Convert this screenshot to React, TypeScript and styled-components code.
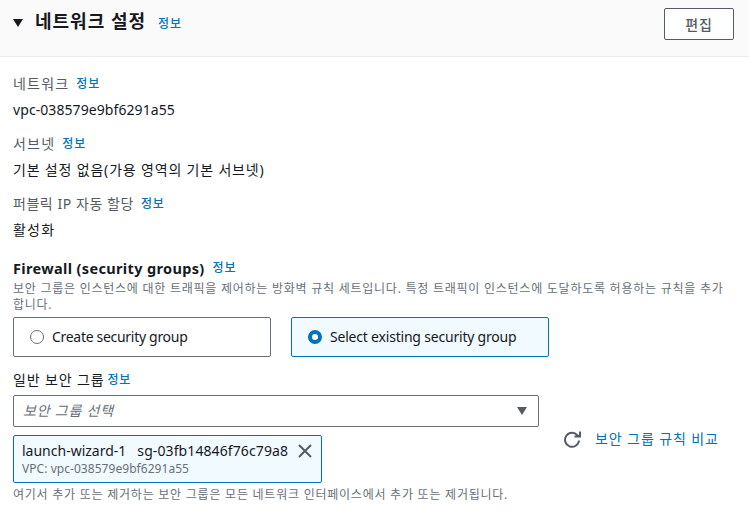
import React from 'react';
import styled, { createGlobalStyle } from 'styled-components';

const GlobalStyle = createGlobalStyle`
  *, *::before, *::after { box-sizing: border-box; }
  body {
    margin: 0;
    background: #fff;
    color: #16191f;
    font-family: "Noto Sans", "Noto Sans CJK KR", sans-serif;
    font-size: 14px;
  }
`;

interface TextProps {
  $size?: number;
  $track?: number;
  $color?: string;
  $weight?: number;
  $line?: number;
}

const Text = styled.span<TextProps>`
  display: block;
  white-space: nowrap;
  font-size: ${(p) => p.$size ?? 14}px;
  letter-spacing: ${(p) => p.$track ?? 0}px;
  color: ${(p) => p.$color ?? '#16191f'};
  font-weight: ${(p) => p.$weight ?? 400};
  line-height: ${(p) => p.$line ?? 22}px;
`;

const InfoLink = styled.a`
  font-size: 12px;
  font-weight: 500;
  letter-spacing: 0.9px;
  line-height: 22px;
  color: #0073bb;
  text-decoration: none;
  white-space: nowrap;
`;

const Panel = styled.main`
  width: 749px;
  height: 519px;
  overflow: hidden;
  background: #fff;
`;

const Header = styled.header`
  display: flex;
  align-items: flex-start;
  height: 57px;
  padding: 8px 15px 0 13px;
  background: #fafafa;
  border-bottom: 1px solid #eaeded;
`;

const Caret = styled.svg`
  display: block;
  width: 10px;
  height: 8px;
  margin: 11px 12px 0 0;
`;

const Title = styled.h2`
  margin: 2px 12px 0 0;
  font-size: 18px;
  font-weight: 700;
  line-height: 22px;
  letter-spacing: 1px;
  white-space: nowrap;
`;

const HeaderInfo = styled.div`
  display: flex;
  flex: 1;
  padding-top: 5px;
`;

const EditButton = styled.button`
  width: 70px;
  height: 32px;
  padding: 0;
  border: 1px solid #545b64;
  border-radius: 2px;
  background: #fff;
  color: #545b64;
  font: 500 14px/28px "Noto Sans CJK KR", sans-serif;
  letter-spacing: 0.8px;
`;

const Content = styled.div`
  padding: 16px 13px 0;
`;

const Field = styled.div`
  height: 60px;
`;

const LabelRow = styled.div<{ $gap?: number }>`
  display: flex;
  align-items: center;
  gap: ${(p) => p.$gap ?? 7}px;
  height: 22px;
`;

const FieldValue = styled.div`
  padding-top: 4px;
`;

const Firewall = styled.section`
  padding-top: 4px;
`;

const Description = styled.div`
  padding-top: 2px;
`;

const Tiles = styled.div`
  display: grid;
  grid-template-columns: 258px 258px;
  gap: 20px;
  margin-top: 4px;
`;

const Tile = styled.label<{ $selected?: boolean }>`
  display: flex;
  align-items: center;
  gap: 8px;
  height: 40px;
  padding-left: 16px;
  border: 1px solid ${(p) => (p.$selected ? '#0073bb' : '#687078')};
  border-radius: 2px;
  background: ${(p) => (p.$selected ? '#f1faff' : '#fff')};
`;

const Radio = styled.span<{ $selected?: boolean }>`
  width: 14px;
  height: 14px;
  border-radius: 50%;
  border: ${(p) => (p.$selected ? '4px solid #0073bb' : '1px solid #687078')};
  background: #fff;
`;

const Groups = styled.section`
  padding-top: 12px;
`;

const GroupRow = styled.div`
  display: flex;
`;

const Picker = styled.div`
  width: 526px;
`;

const Select = styled.div`
  display: flex;
  align-items: center;
  justify-content: space-between;
  height: 32px;
  margin-top: 4px;
  padding: 0 11px 0 9px;
  border: 1px solid #687078;
  border-radius: 2px;
  font-style: italic;
`;

const SelectCaret = styled.svg`
  display: block;
  width: 10px;
  height: 8px;
`;

const Token = styled.div`
  display: flex;
  justify-content: space-between;
  width: 309px;
  height: 48px;
  margin: 8px 0 1px;
  padding: 5px 9px 0 8px;
  border: 1px solid #0073bb;
  border-radius: 2px;
  background: #f1faff;
`;

const TokenLine = styled.div`
  display: flex;
  gap: 11px;
`;

const CloseIcon = styled.svg`
  display: block;
  width: 14px;
  height: 14px;
  margin-top: 3px;
`;

const Compare = styled.div`
  display: flex;
  align-items: flex-start;
  gap: 14px;
  padding: 37px 0 0 25px;
`;

const RefreshIcon = styled.svg`
  display: block;
  width: 17px;
  height: 17px;
  margin-top: 3px;
`;

const fields = [
  { label: '네트워크', track: 1.2, value: 'vpc-038579e9bf6291a55', valueTrack: 0.08 },
  { label: '서브넷', track: 1.2, value: '기본 설정 없음(가용 영역의 기본 서브넷)', valueTrack: 0.82 },
  { label: '퍼블릭 IP 자동 할당', track: 0.55, value: '활성화', valueTrack: 1.2 },
];

export default function App() {
  return (
    <Panel>
      <GlobalStyle />
      <Header>
        <Caret viewBox="0 0 10 8"><path d="M0 0h10L5 8z" fill="#16191f" /></Caret>
        <Title>네트워크 설정</Title>
        <HeaderInfo><InfoLink>정보</InfoLink></HeaderInfo>
        <EditButton>편집</EditButton>
      </Header>
      <Content>
        {fields.map((f) => (
          <Field key={f.label}>
            <LabelRow>
              <Text $color="#545b64" $track={f.track}>{f.label}</Text>
              <InfoLink>정보</InfoLink>
            </LabelRow>
            <FieldValue><Text $track={f.valueTrack}>{f.value}</Text></FieldValue>
          </Field>
        ))}
        <Firewall>
          <LabelRow $gap={8}>
            <Text $weight={700} $size={14.5} $track={0.35}>Firewall (security groups)</Text>
            <InfoLink>정보</InfoLink>
          </LabelRow>
          <Description>
            <Text $size={12} $track={0.75} $color="#687078" $line={16}>
              보안 그룹은 인스턴스에 대한 트래픽을 제어하는 방화벽 규칙 세트입니다. 특정 트래픽이 인스턴스에 도달하도록 허용하는 규칙을 추가
              <br />
              합니다.
            </Text>
          </Description>
          <Tiles>
            <Tile>
              <Radio />
              <Text $track={-0.3}>Create security group</Text>
            </Tile>
            <Tile $selected>
              <Radio $selected />
              <Text $track={-0.2}>Select existing security group</Text>
            </Tile>
          </Tiles>
        </Firewall>
        <Groups>
          <LabelRow $gap={3}>
            <Text $track={0.85}>일반 보안 그룹</Text>
            <InfoLink>정보</InfoLink>
          </LabelRow>
          <GroupRow>
            <Picker>
              <Select>
                <Text $color="#687078" $track={0.8}>보안 그룹 선택</Text>
                <SelectCaret viewBox="0 0 10 8"><path d="M0 0h10L5 8z" fill="#545b64" /></SelectCaret>
              </Select>
              <Token>
                <div>
                  <TokenLine>
                    <Text $line={20}>launch-wizard-1</Text>
                    <Text $line={20} $track={0.1}>sg-03fb14846f76c79a8</Text>
                  </TokenLine>
                  <Text $size={12} $track={0.05} $color="#687078" $line={16}>VPC: vpc-038579e9bf6291a55</Text>
                </div>
                <CloseIcon viewBox="0 0 14 14"><path d="M1 1l12 12M13 1L1 13" stroke="#545b64" strokeWidth="2" /></CloseIcon>
              </Token>
              <Text $size={12} $track={0.76} $color="#687078" $line={22}>
                여기서 추가 또는 제거하는 보안 그룹은 모든 네트워크 인터페이스에서 추가 또는 제거됩니다.
              </Text>
            </Picker>
            <Compare>
              <RefreshIcon viewBox="0 0 17 17" fill="none" stroke="#545b64" strokeWidth="2">
                <path d="M15 9.5a7 7 0 1 1-1.6-5.2L15 5.4M10.5 5.5H16V0.5" />
              </RefreshIcon>
              <Text $color="#0073bb" $track={0.9}>보안 그룹 규칙 비교</Text>
            </Compare>
          </GroupRow>
        </Groups>
      </Content>
    </Panel>
  );
}
